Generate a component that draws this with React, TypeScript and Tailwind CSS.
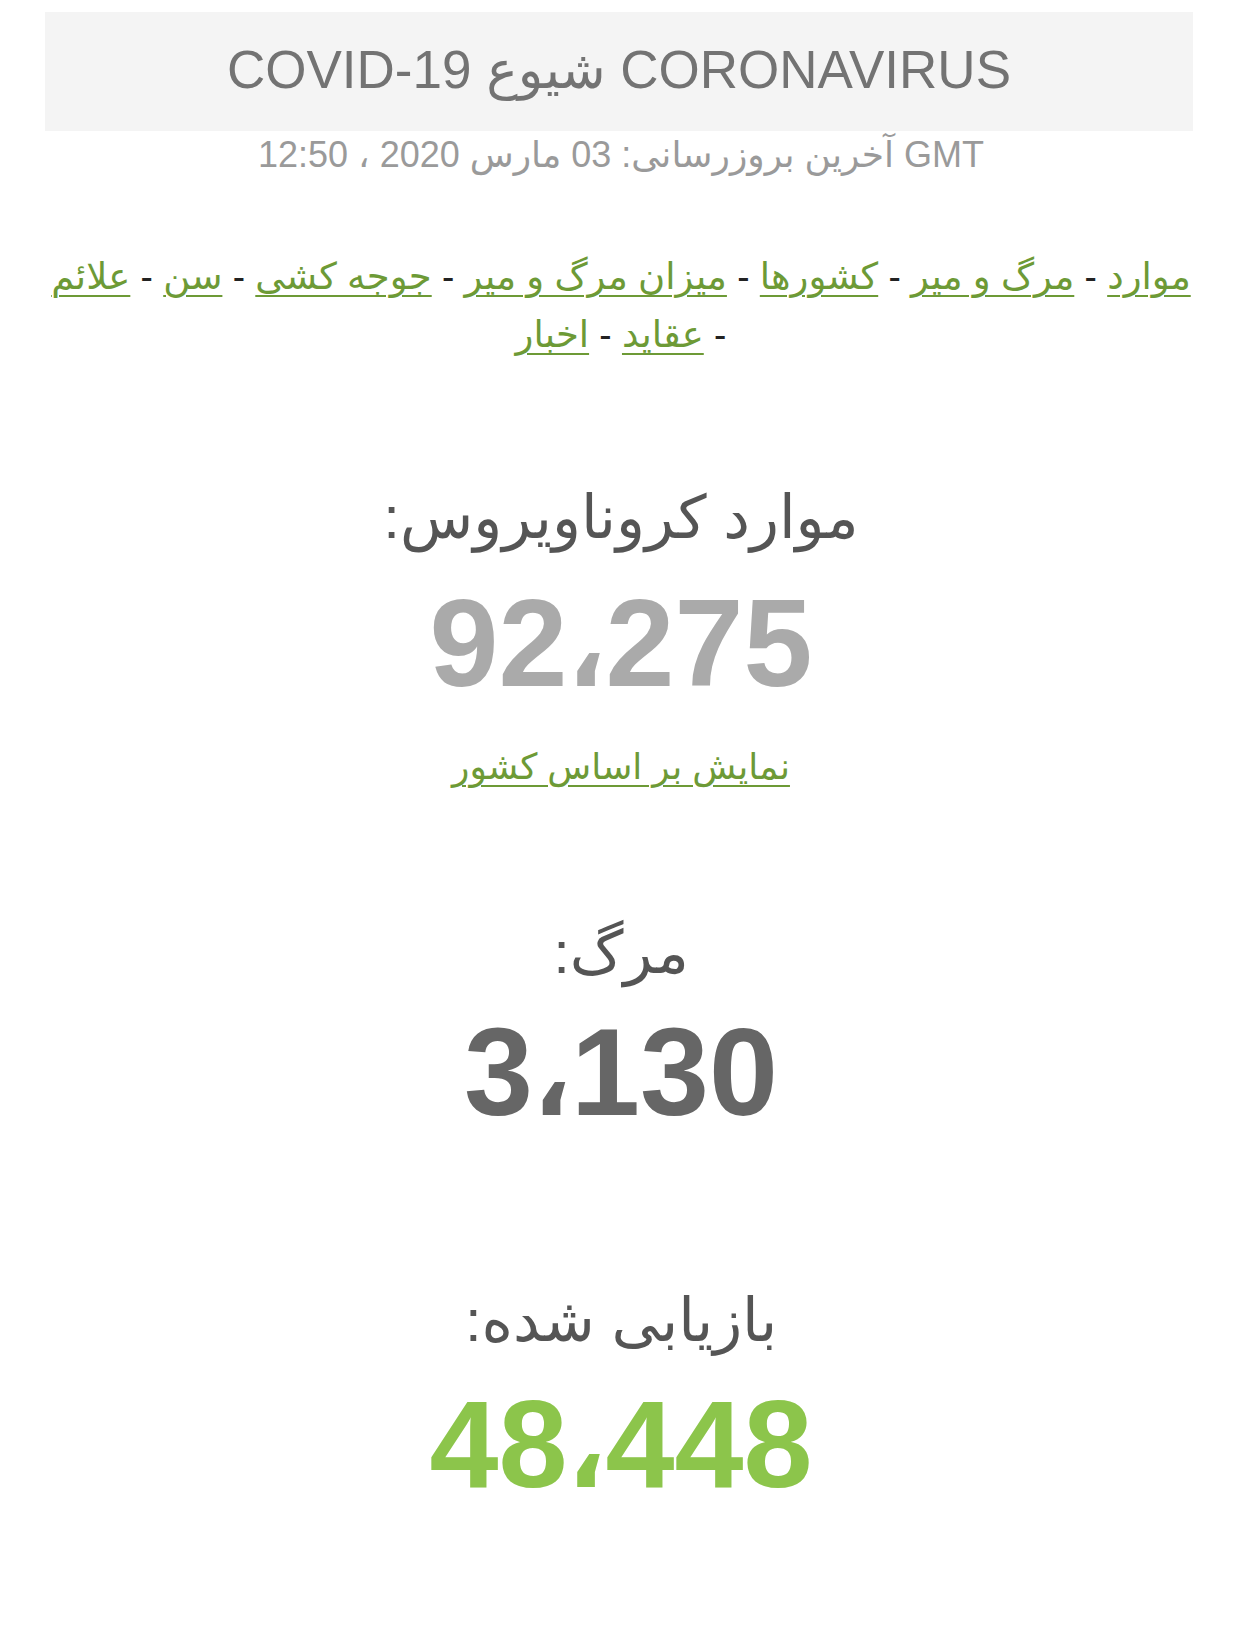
const FONT = "font-['Liberation_Sans','DejaVu_Sans',sans-serif]";

function NavLink({ children }: { children: string }) {
  return (
    <a href="#" className="text-[#6d9a36] underline underline-offset-[6px] decoration-[2px]">
      {children}
    </a>
  );
}

const Sep = () => <span className="text-[#222]"> - </span>;

// big counter with a slim arabic comma between the groups
function Counter({ head, tail, color }: { head: string; tail: string; color: string }) {
  return (
    <div dir="ltr" className={`text-[124px] leading-none font-bold ${color}`}>
      {head}
      <span className="text-[100px]">،</span>
      {tail}
    </div>
  );
}

export default function App() {
  return (
    <div dir="rtl" className={`${FONT} bg-white min-h-[1647px] w-[1242px] pt-[12px] text-center`}>
      {/* header */}
      <div className="ml-[45px] mr-[49px] h-[119px] bg-[#f4f4f4] flex items-center justify-center">
        <h1 className="text-[53px] leading-none text-[#737373] font-normal -mt-[4px]">CORONAVIRUS شیوع COVID-19</h1>
      </div>
      <div className="text-[36px] leading-[48px] text-[#9a9a9a]">GMT آخرین بروزرسانی: 03 مارس 2020 ، 12:50</div>

      {/* nav */}
      <div className="mt-[69px] text-[37px] leading-[58px] px-[40px]">
        <NavLink>موارد</NavLink>
        <Sep />
        <NavLink>مرگ و میر</NavLink>
        <Sep />
        <NavLink>کشورها</NavLink>
        <Sep />
        <NavLink>میزان مرگ و میر</NavLink>
        <Sep />
        <NavLink>جوجه کشی</NavLink>
        <Sep />
        <NavLink>سن</NavLink>
        <Sep />
        <NavLink>علائم</NavLink>
        <br />
        <span className="text-[#222]">- </span>
        <NavLink>عقاید</NavLink>
        <Sep />
        <NavLink>اخبار</NavLink>
      </div>

      {/* cases */}
      <div className="mt-[114px] text-[60px] leading-[80px] text-[#555]">موارد کروناویروس:</div>
      <div className="mt-[23px]">
        <Counter head="92" tail="275" color="text-[#aaaaaa]" />
      </div>
      <div className="mt-[37px] text-[36px] leading-[50px]">
        <NavLink>نمایش بر اساس کشور</NavLink>
      </div>

      {/* deaths */}
      <div className="mt-[121px] text-[60px] leading-[80px] text-[#555]">مرگ:</div>
      <div className="mt-[17px]">
        <Counter head="3" tail="130" color="text-[#666666]" />
      </div>

      {/* recovered */}
      <div className="mt-[147px] text-[60px] leading-[80px] text-[#555]">بازیابی شده:</div>
      <div className="mt-[21px]">
        <Counter head="48" tail="448" color="text-[#8cc54b]" />
      </div>
    </div>
  );
}
